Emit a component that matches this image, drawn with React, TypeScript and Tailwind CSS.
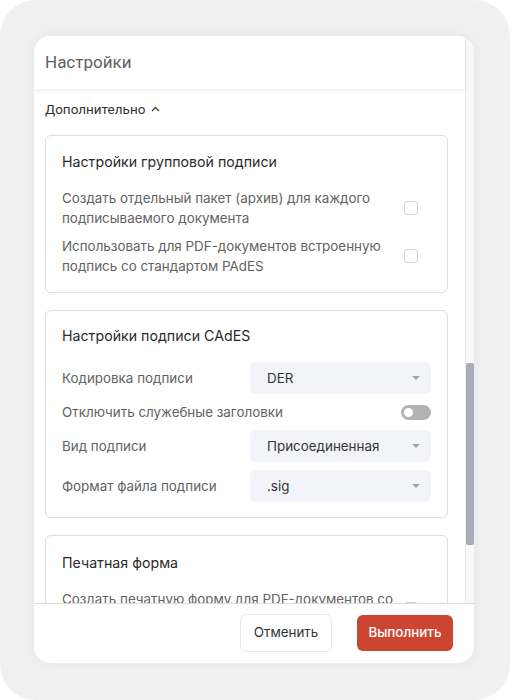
import React from "react";

const Checkbox = () => (
  <div className="w-[14px] h-[14px] shrink-0 rounded-[3px] border border-[#d3d3dd] bg-white mr-[13px]" />
);

const Caret = () => (
  <svg width="10" height="6" viewBox="0 0 10 6" className="shrink-0">
    <path d="M1 1h8L5 5z" fill="#a3a4ad" />
  </svg>
);

const Select = ({ value }: { value: string }) => (
  <div className="w-[181px] h-[32px] shrink-0 rounded-[6px] bg-[#f3f4f9] flex items-center justify-between pl-[17px] pr-[10px]">
    <span className="text-[13.4px] text-[#333]">{value}</span>
    <Caret />
  </div>
);

const Toggle = () => (
  <div className="w-[30px] h-[15px] shrink-0 rounded-full bg-[#b3b3b3] flex items-center px-[3px]">
    <div className="w-[9px] h-[9px] rounded-full bg-white" />
  </div>
);

const Card = ({
  title,
  top = "pt-4",
  bottom = "pb-4",
  children,
}: {
  title: string;
  top?: string;
  bottom?: string;
  children: React.ReactNode;
}) => (
  <div className={`rounded-[6px] border border-[#dcdde3] px-4 ${top} ${bottom}`}>
    <div className="text-[14.2px] leading-5 text-[#2b2b2b] mb-4">{title}</div>
    {children}
  </div>
);

const CheckRow = ({ text }: { text: string }) => (
  <div className="flex items-center justify-between">
    <div className="text-[13.4px] leading-5 text-[#626262] w-[345px]">{text}</div>
    <Checkbox />
  </div>
);

const SelectRow = ({ label, value }: { label: string; value: string }) => (
  <div className="flex items-center justify-between">
    <span className="text-[13.4px] text-[#626262]">{label}</span>
    <Select value={value} />
  </div>
);

export default function App() {
  return (
    <div className="w-[510px] h-[700px] bg-white">
      <div
        className="w-[510px] h-[700px] rounded-[36px] bg-[#f0f0f0] pl-[34px] pt-[36px]"
        style={{ fontFamily: "Inter, 'Noto Sans', sans-serif" }}
      >
        <div className="w-[440px] h-[627px] rounded-[16px] bg-white shadow-[0_0_10px_rgba(0,0,0,0.06)] flex flex-col overflow-hidden">
          <div className="flex h-[567px]">
            <div className="flex-1 flex flex-col min-w-0">
              <div
                className="h-[53px] shrink-0 flex items-center pl-[11px] text-[17px] text-[#5f5f5f] shadow-[0_2px_4px_rgba(0,0,0,0.07)] relative z-10"
                style={{ fontFamily: "Roboto, sans-serif" }}
              >
                Настройки
              </div>
              <div className="flex-1 overflow-hidden pl-[11px] pr-[17px] pt-[11px]">
                <div
                  className="flex items-center gap-[6px] h-[18px] text-[13.5px] text-[#333]"
                  style={{ fontFamily: "Roboto, sans-serif" }}
                >
                  Дополнительно
                  <svg width="9" height="6" viewBox="0 0 9 6">
                    <path d="M1 5l3.5-3.5L8 5" fill="none" stroke="#444" strokeWidth="1.3" />
                  </svg>
                </div>
                <div className="flex flex-col gap-[17px] mt-[17px]">
                  <Card title="Настройки групповой подписи">
                    <div className="flex flex-col gap-2">
                      <CheckRow text="Создать отдельный пакет (архив) для каждого подписываемого документа" />
                      <CheckRow text="Использовать для PDF-документов встроенную подпись со стандартом PAdES" />
                    </div>
                  </Card>
                  <Card title="Настройки подписи CAdES" top="pt-[15px]" bottom="pb-[15px]">
                    <div className="flex flex-col gap-2">
                      <SelectRow label="Кодировка подписи" value="DER" />
                      <div className="flex items-center justify-between h-5">
                        <span className="text-[13.4px] text-[#626262]">Отключить служебные заголовки</span>
                        <Toggle />
                      </div>
                      <SelectRow label="Вид подписи" value="Присоединенная" />
                      <SelectRow label="Формат файла подписи" value=".sig" />
                    </div>
                  </Card>
                  <Card title="Печатная форма" top="pt-[17px]">
                    <div className="flex flex-col gap-2">
                      <CheckRow text="Создать печатную форму для PDF-документов со штампом электронной подписи" />
                    </div>
                  </Card>
                </div>
              </div>
            </div>
            <div className="w-[9px] shrink-0 bg-[#f8f8f8] border-l border-[#ececec] flex flex-col">
              <div className="h-[327px] shrink-0" />
              <div className="h-[182px] w-[8px] rounded-[2px] bg-[#a9abb8]" />
            </div>
          </div>
          <div className="flex-1 border-t border-[#dcdcdc] flex items-center justify-end gap-[25px] pr-[21px] pb-[2px]">
            <button className="h-[38px] w-[92px] rounded-[6px] border border-[#e6e9ef] bg-white text-[13.4px] text-[#333]">
              Отменить
            </button>
            <button className="h-[36px] w-[96px] rounded-[6px] bg-[#cc4533] text-[13.4px] font-medium text-white">
              Выполнить
            </button>
          </div>
        </div>
      </div>
    </div>
  );
}
